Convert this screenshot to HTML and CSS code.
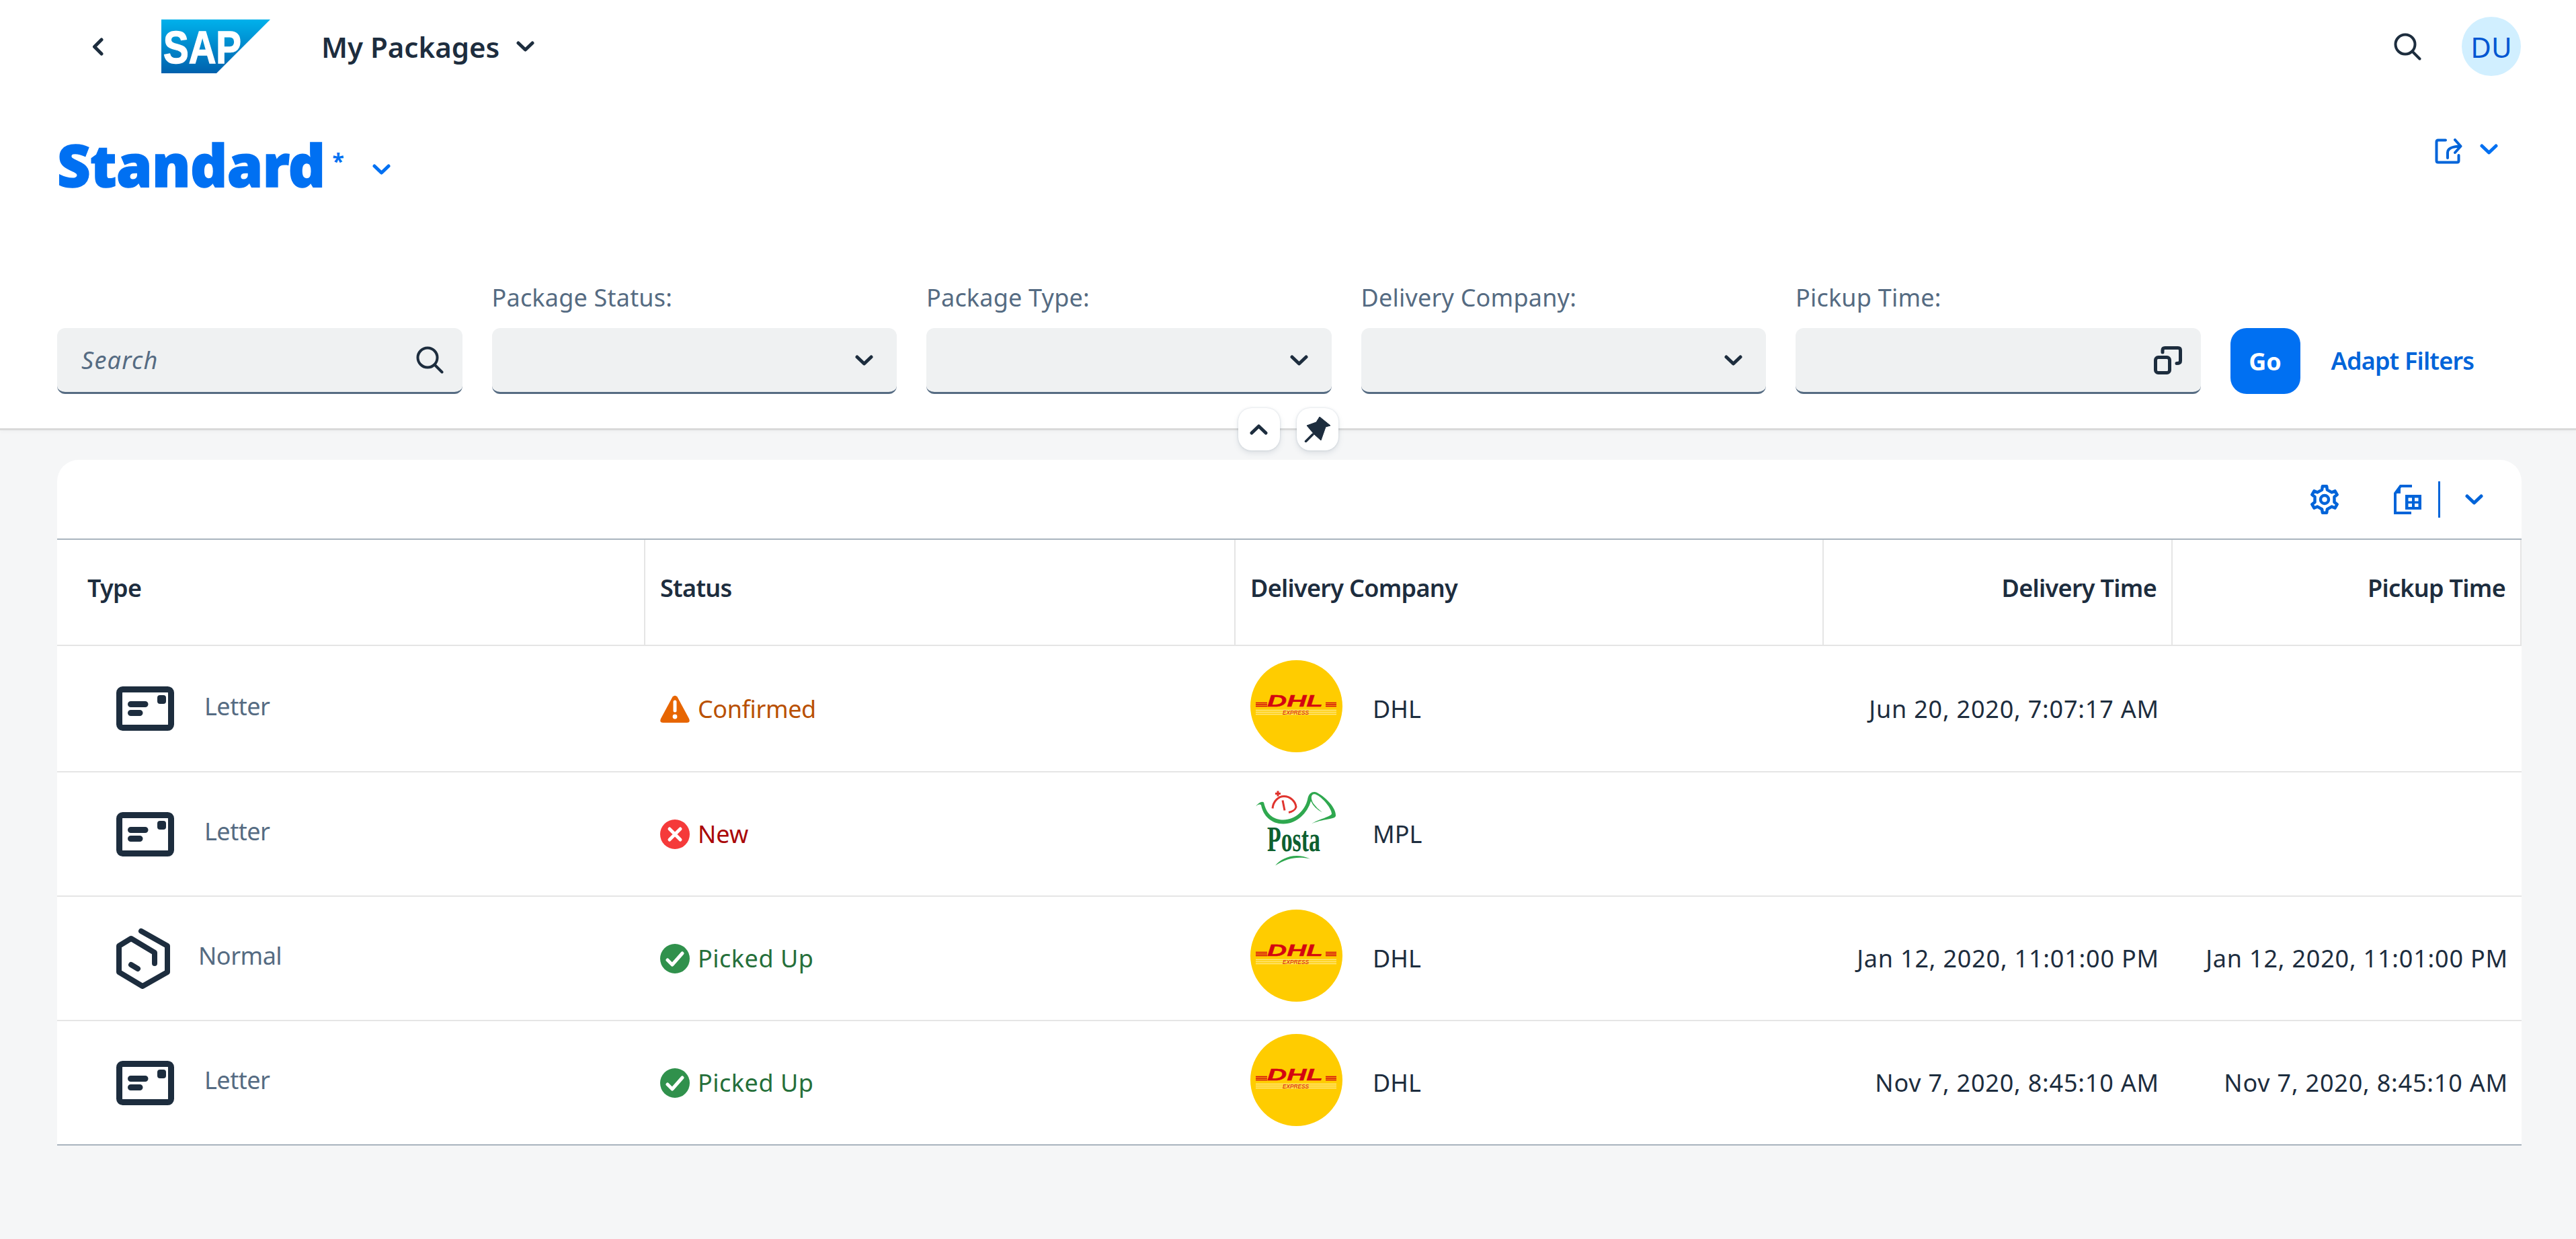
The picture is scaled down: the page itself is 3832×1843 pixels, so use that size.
FILE: index.html
```html
<!DOCTYPE html>
<html lang="en">
<head>
    <meta charset="UTF-8">
    <meta name="viewport" content="width=device-width, initial-scale=1.0">
    <title>My Packages</title>
    <link rel="stylesheet" href="styles.css">
</head>
<body>

    <svg class="icon-defs" width="0" height="0">
        <defs>
            <linearGradient id="sap-blue" x1="0" y1="0" x2="0" y2="1">
                <stop offset="0" stop-color="#00b1eb"/>
                <stop offset="1" stop-color="#0061ad"/>
            </linearGradient>
            <symbol id="i-search" viewBox="0 0 41 41">
                <circle cx="17" cy="17" r="14.5" fill="none" stroke="currentColor" stroke-width="4"/>
                <path d="M27.5 27.5L38.5 38.5" fill="none" stroke="currentColor" stroke-width="4" stroke-linecap="round"/>
            </symbol>
            <symbol id="i-down" viewBox="0 0 27 16">
                <path d="M3 3L13.5 13L24 3" fill="none" stroke="currentColor" stroke-width="5" stroke-linecap="round" stroke-linejoin="round"/>
            </symbol>
            <symbol id="i-letter" viewBox="0 0 86 66">
                <rect x="4.5" y="4.5" width="77" height="57" rx="5" fill="none" stroke="currentColor" stroke-width="9"/>
                <path d="M21.5 26.5H43M21.5 39.5H35" fill="none" stroke="currentColor" stroke-width="9" stroke-linecap="round"/>
                <rect x="61" y="13" width="13" height="13" rx="4" fill="currentColor"/>
            </symbol>
            <symbol id="i-box" viewBox="0 0 80 90">
                <path d="M37 4L76 26V65L39 86L4 65V26L22 15L57 36V52M22 54L32 60" fill="none" stroke="currentColor" stroke-width="8" stroke-linecap="round" stroke-linejoin="round"/>
            </symbol>
            <symbol id="i-warning" viewBox="0 0 44 41">
                <path d="M18.5 2.5Q22 -1 25.500 2.500L43 35Q45.500 41 39.500 41H4.500Q-1.500 41 1 35Z" fill="#e76500"/>
                <path d="M22 10V23" stroke="#fff" stroke-width="5" stroke-linecap="round"/>
                <circle cx="22" cy="32" r="3.400" fill="#fff"/>
            </symbol>
            <symbol id="i-error" viewBox="0 0 44 44">
                <circle cx="22" cy="22" r="22" fill="#f53a3a"/>
                <path d="M14 14L30 30M30 14L14 30" stroke="#fff" stroke-width="5" stroke-linecap="round"/>
            </symbol>
            <symbol id="i-success" viewBox="0 0 44 44">
                <circle cx="22" cy="22" r="22" fill="#30914c"/>
                <path d="M11 24L18 31L33 14" fill="none" stroke="#fff" stroke-width="5" stroke-linecap="round" stroke-linejoin="round"/>
            </symbol>
            <symbol id="i-dhl" viewBox="0 0 137 137">
                <circle cx="68.500" cy="68.500" r="68.500" fill="#ffcc00"/>
                <path d="M8 74.500H128M8 77.500H128M8 80.500H128" stroke="#ffe680" stroke-width="1.600"/>
                <path d="M8 63.500H25M8 66H25M8 68.500H25M112 63.500H128M112 66H128M112 68.500H128" stroke="#d40511" stroke-width="1.300"/>
                <text x="25" y="69" class="dhl-word" textLength="83" lengthAdjust="spacingAndGlyphs">DHL</text>
                <text x="48" y="81" class="dhl-small" textLength="39" lengthAdjust="spacingAndGlyphs">EXPRESS</text>
            </symbol>
            <symbol id="i-posta" viewBox="-7 -7.500 137 137">
                <path d="M1 24Q8 15 13 18C17 38 30 44 42 44C60 44 74 30 78 14C80 2 88 1 93 4C106 11 121 27 120 38C119 44 100 42 84 50C96 42 112 40 114 35C114 27 100 10 90 6C83 4 82 12 87 20Q92 27 100 33Q88 27 83 16C78 34 62 50 42 50C24 50 12 38 9 22Q6 19 1 24Z" fill="#2fa84f"/>
                <path d="M26 27C27 16 35 9 43 9C52 9 60 16 61 25C60 29 55 32 50 33M41 15L44 30M30 5H38M34 1V9" fill="none" stroke="#e0342e" stroke-width="3"/>
                <text x="18" y="90" class="posta-word" textLength="79" lengthAdjust="spacingAndGlyphs">Posta</text>
                <path d="M30 112C40 100 60 92 82 102C65 98 48 100 30 112Z" fill="#2fa84f"/>
            </symbol>
        </defs>
    </svg>

    <!-- Top part: shell bar, variant title and filters -->
    <header class="page-header">
        <div class="shellbar">
            <svg class="back-icon" viewBox="0 0 17 27"><path d="M14 3L3.500 13.500L14 24" fill="none" stroke="currentColor" stroke-width="5" stroke-linecap="round" stroke-linejoin="round"/></svg>
            <svg class="sap-logo" viewBox="0 0 162 80">
                <path d="M0 0H162L82 80H0Z" fill="url(#sap-blue)"/>
                <text x="3" y="65" class="sap-word" textLength="116" lengthAdjust="spacingAndGlyphs">SAP</text>
            </svg>
            <span class="app-title">My Packages</span>
            <svg class="chevron app-chevron"><use href="#i-down"/></svg>
            <svg class="shell-search"><use href="#i-search"/></svg>
            <div class="avatar">DU</div>
        </div>

        <div class="variant-row">
            <h1 class="variant-title">Standard</h1>
            <span class="variant-star">*</span>
            <svg class="chevron variant-chevron"><use href="#i-down"/></svg>
            <div class="variant-actions">
                <svg class="share-icon" viewBox="0 0 41 38">
                    <path d="M16 2.500H5Q2.500 2.500 2.500 5V33Q2.500 35.500 5 35.500H33Q35.500 35.500 35.500 33V25M19 29V21Q19 12 38 11.500M30 2L38.500 11.500L30 21" fill="none" stroke="currentColor" stroke-width="4" stroke-linecap="round" stroke-linejoin="round"/>
                </svg>
                <svg class="chevron"><use href="#i-down"/></svg>
            </div>
        </div>

        <div class="filter-bar">
            <div class="filter">
                <div class="field">
                    <span class="placeholder">Search</span>
                    <svg class="field-search"><use href="#i-search"/></svg>
                </div>
            </div>
            <div class="filter">
                <label class="filter-label">Package Status:</label>
                <div class="field"><svg class="chevron"><use href="#i-down"/></svg></div>
            </div>
            <div class="filter">
                <label class="filter-label">Package Type:</label>
                <div class="field"><svg class="chevron"><use href="#i-down"/></svg></div>
            </div>
            <div class="filter">
                <label class="filter-label">Delivery Company:</label>
                <div class="field"><svg class="chevron"><use href="#i-down"/></svg></div>
            </div>
            <div class="filter">
                <label class="filter-label">Pickup Time:</label>
                <div class="field">
                    <svg class="value-help" viewBox="0 0 42 42">
                        <rect x="2.500" y="16.500" width="21" height="23" rx="4" fill="none" stroke="currentColor" stroke-width="5"/>
                        <path d="M13 9V6Q13 2.500 16.500 2.500H36Q39.500 2.500 39.500 6V22Q39.500 25.500 34 25.500" fill="none" stroke="currentColor" stroke-width="5" stroke-linecap="round"/>
                    </svg>
                </div>
            </div>
            <button class="go-button">Go</button>
            <a class="adapt-link">Adapt Filters</a>
        </div>

        <!-- Collapse and pin buttons sit on the header edge -->
        <div class="header-controls">
            <div class="round-button">
                <svg class="chevron chevron-up"><use href="#i-down"/></svg>
            </div>
            <div class="round-button">
                <svg class="pin-icon" viewBox="0 0 39 38">
                    <path d="M23 0L39 13L32 15L25 35L15 26L4 13L18 8Z" fill="currentColor" stroke="currentColor" stroke-width="1" stroke-linejoin="round"/>
                    <path d="M13 26L2.500 36.500" stroke="currentColor" stroke-width="3.500" stroke-linecap="round"/>
                </svg>
            </div>
        </div>
    </header>

    <main class="content">
        <section class="table-card">
            <div class="table-toolbar">
                <svg class="gear-icon" viewBox="0 0 44 44">
                    <path d="M18.120 7.510L18.870 2.250H25.130L25.880 7.510L32.600 11.400L37.540 9.410L40.670 14.830L36.490 18.120V25.880L40.670 29.170L37.540 34.590L32.600 32.600L25.880 36.490L25.130 41.750H18.870L18.120 36.490L11.400 32.600L6.460 34.590L3.330 29.170L7.510 25.880V18.120L3.330 14.830L6.460 9.410L11.400 11.400Z" fill="none" stroke="currentColor" stroke-width="4.500" stroke-linejoin="round"/>
                    <circle cx="22" cy="22" r="6" fill="none" stroke="currentColor" stroke-width="4.500"/>
                </svg>
                <svg class="export-icon" viewBox="0 0 41 44">
                    <path d="M27 2H10L2 13V42H26" fill="none" stroke="currentColor" stroke-width="4"/>
                    <path d="M10 2L2 13H10Z" fill="currentColor"/>
                    <path d="M17 15H41V37H17ZM21.500 19.500V24.500H27V19.500ZM31 19.500V24.500H36.500V19.500ZM21.500 28V33H27V28ZM31 28V33H36.500V28Z" fill="currentColor" fill-rule="evenodd"/>
                </svg>
                <span class="toolbar-divider"></span>
                <svg class="chevron"><use href="#i-down"/></svg>
            </div>

            <table class="packages">
                <colgroup>
                    <col class="col-main">
                    <col class="col-main-wide">
                    <col class="col-main">
                    <col class="col-time">
                    <col class="col-time">
                </colgroup>
                <thead>
                    <tr>
                        <th>Type</th>
                        <th>Status</th>
                        <th>Delivery Company</th>
                        <th class="align-end">Delivery Time</th>
                        <th class="align-end">Pickup Time</th>
                    </tr>
                </thead>
                <tbody>
                    <tr class="first-row">
                        <td><div class="type-cell"><svg class="letter-icon"><use href="#i-letter"/></svg><span>Letter</span></div></td>
                        <td><div class="status status-warning"><svg class="status-icon warning-icon"><use href="#i-warning"/></svg>Confirmed</div></td>
                        <td><div class="company"><svg class="company-logo"><use href="#i-dhl"/></svg><span>DHL</span></div></td>
                        <td class="align-end time-cell">Jun 20, 2020, 7:07:17 AM</td>
                        <td class="align-end time-cell"></td>
                    </tr>
                    <tr>
                        <td><div class="type-cell"><svg class="letter-icon"><use href="#i-letter"/></svg><span>Letter</span></div></td>
                        <td><div class="status status-error"><svg class="status-icon"><use href="#i-error"/></svg>New</div></td>
                        <td><div class="company"><svg class="company-logo"><use href="#i-posta"/></svg><span>MPL</span></div></td>
                        <td class="align-end time-cell"></td>
                        <td class="align-end time-cell"></td>
                    </tr>
                    <tr>
                        <td><div class="type-cell"><svg class="box-icon"><use href="#i-box"/></svg><span>Normal</span></div></td>
                        <td><div class="status status-success"><svg class="status-icon"><use href="#i-success"/></svg>Picked Up</div></td>
                        <td><div class="company"><svg class="company-logo"><use href="#i-dhl"/></svg><span>DHL</span></div></td>
                        <td class="align-end time-cell">Jan 12, 2020, 11:01:00 PM</td>
                        <td class="align-end time-cell">Jan 12, 2020, 11:01:00 PM</td>
                    </tr>
                    <tr class="last-row">
                        <td><div class="type-cell"><svg class="letter-icon"><use href="#i-letter"/></svg><span>Letter</span></div></td>
                        <td><div class="status status-success"><svg class="status-icon"><use href="#i-success"/></svg>Picked Up</div></td>
                        <td><div class="company"><svg class="company-logo"><use href="#i-dhl"/></svg><span>DHL</span></div></td>
                        <td class="align-end time-cell">Nov 7, 2020, 8:45:10 AM</td>
                        <td class="align-end time-cell">Nov 7, 2020, 8:45:10 AM</td>
                    </tr>
                </tbody>
            </table>
        </section>
    </main>

</body>
</html>
```

FILE: styles.css
```css
/* Page base */
* {
    box-sizing: border-box;
}

body {
    margin: 0;
    min-height: 100vh;
    background-color: #f5f6f7;
    color: #1d2d3e;
    font-family: "Noto Sans", "Open Sans", sans-serif;
    font-size: 36px;
}

svg {
    display: block;
    flex-shrink: 0;
}

.icon-defs {
    position: absolute;
}

.chevron {
    width: 27px;
    height: 16px;
    color: #1d2d3e;
}

/* Header block */
.page-header {
    position: relative;
    height: 640px;
    background-color: #fff;
    border-bottom: 3px solid #d9d9d9;
    box-shadow: 0 2px 6px rgba(0, 0, 0, 0.03);
}

.shellbar {
    display: flex;
    align-items: center;
    height: 138px;
    padding: 0 82px 0 137px;
}

.back-icon {
    width: 17px;
    height: 27px;
    margin-right: 86px;
}

.sap-logo {
    width: 162px;
    height: 80px;
    margin-right: 76px;
}

.sap-word {
    font-family: "Liberation Sans", sans-serif;
    font-weight: 700;
    font-size: 68px;
    fill: #fff;
    stroke: #fff;
    stroke-width: 1.5px;
}

.app-title {
    font-size: 42px;
    font-weight: 600;
}

.app-chevron {
    margin-left: 25px;
}

.shell-search {
    width: 41px;
    height: 41px;
    margin-left: auto;
    margin-right: 60px;
}

.avatar {
    display: flex;
    align-items: center;
    justify-content: center;
    width: 88px;
    height: 88px;
    border-radius: 50%;
    background-color: #d1efff;
    color: #0057d2;
    font-size: 42px;
}

/* Variant title row */
.variant-row {
    display: flex;
    align-items: flex-start;
    height: 294px;
    padding: 64px 116px 0 85px;
    color: #0070f2;
}

.variant-title {
    margin: 0;
    font-size: 86px;
    line-height: 86px;
    font-weight: 900;
    letter-spacing: -0.6px;
    -webkit-text-stroke: 1.5px #0070f2;
}

.variant-star {
    width: 16px;
    margin: 8px 0 0 11px;
    font-size: 32px;
    font-weight: 700;
    line-height: 60px;
}

.variant-chevron {
    margin: 42px 0 0 44px;
    color: #0070f2;
}

.variant-actions {
    display: flex;
    align-items: flex-start;
    gap: 26px;
    margin-left: auto;
    margin-top: 4px;
    color: #0064d9;
}

.variant-actions .chevron {
    margin-top: 8px;
    color: #0070f2;
}

.share-icon {
    width: 41px;
    height: 38px;
}

/* Filter bar */
.filter-bar {
    display: flex;
    align-items: flex-end;
    gap: 44px;
    padding: 0 0 0 85px;
}

.filter {
    width: 602.500px;
}

.filter-label {
    display: block;
    height: 56px;
    color: #556b82;
    font-size: 36px;
    line-height: 22px;
    letter-spacing: 0.2px;
}

.field {
    display: flex;
    align-items: center;
    justify-content: flex-end;
    height: 98px;
    padding: 0 28px 0 36px;
    background-color: #eff1f2;
    border-bottom: 3px solid #556b82;
    border-radius: 12px;
}

.field .chevron {
    margin-right: 7px;
}

.placeholder {
    margin-right: auto;
    color: #556b82;
    font-style: italic;
    letter-spacing: 1.2px;
}

.field-search {
    width: 41px;
    height: 41px;
}

.value-help {
    width: 42px;
    height: 42px;
}

.go-button {
    width: 104px;
    height: 98px;
    border: 0;
    border-radius: 24px;
    background-color: #0070f2;
    color: #fff;
    font-family: inherit;
    font-size: 36px;
    font-weight: 700;
}

.adapt-link {
    margin-left: 2px;
    color: #0064d9;
    font-size: 36px;
    font-weight: 600;
    line-height: 98px;
    letter-spacing: -0.8px;
}

.header-controls {
    position: absolute;
    left: 0;
    right: 0;
    top: 607px;
    display: flex;
    justify-content: center;
    gap: 25px;
}

.round-button {
    display: flex;
    align-items: center;
    justify-content: center;
    width: 62px;
    height: 63px;
    border-radius: 20px;
    background-color: #fff;
    box-shadow: 0 0 3px rgba(85, 107, 130, 0.25), 0 4px 8px rgba(85, 107, 130, 0.15);
}

.chevron-up {
    transform: rotate(180deg);
}

.pin-icon {
    width: 39px;
    height: 38px;
}

/* Table card */
.content {
    padding: 44px 81px 0 85px;
}

.table-card {
    background-color: #fff;
    border-radius: 32px 32px 0 0;
}

.table-toolbar {
    display: flex;
    align-items: center;
    justify-content: flex-end;
    height: 119px;
    padding-right: 57px;
    border-bottom: 2px solid #a9b4be;
    color: #0064d9;
}

.table-toolbar .chevron {
    color: #0064d9;
}

.gear-icon {
    width: 44px;
    height: 44px;
    margin-right: 81px;
}

.export-icon {
    width: 41px;
    height: 44px;
}

.toolbar-divider {
    width: 3px;
    height: 54px;
    margin: 0 37px 0 25px;
    background-color: #0064d9;
}

.packages {
    width: 100%;
    table-layout: fixed;
    border-collapse: separate;
    border-spacing: 0;
}

.col-main {
    width: 875px;
}

.col-main-wide {
    width: 878px;
}

.packages th {
    height: 158px;
    padding: 0 22px 14px;
    border-right: 2px solid #e5e5e5;
    border-bottom: 2px solid #e5e5e5;
    text-align: left;
    font-weight: 600;
    letter-spacing: -0.7px;
}

.packages th:first-child {
    padding-left: 45px;
}

.packages td {
    height: 185px;
    padding: 0 22px;
    border-bottom: 2px solid #e5e5e5;
}

.packages .first-row td {
    height: 188px;
}

.packages .last-row td {
    border-bottom-color: #a9b4be;
}

.packages .align-end {
    text-align: right;
}

.packages .time-cell {
    padding-right: 20px;
    letter-spacing: 0.8px;
}

/* Cell contents */
.type-cell {
    display: flex;
    align-items: center;
    gap: 45px;
    padding-left: 66px;
    color: #1d2d3e;
}

.type-cell span {
    padding-bottom: 8px;
    color: #556b82;
    letter-spacing: -0.5px;
}

.letter-icon {
    width: 86px;
    height: 66px;
}

.box-icon {
    width: 80px;
    height: 90px;
    margin-right: -3px;
}

.status {
    display: flex;
    align-items: center;
    gap: 12px;
}

.status-icon {
    width: 44px;
    height: 44px;
}

.warning-icon {
    height: 41px;
}

.status-warning {
    color: #b95000;
    letter-spacing: -0.4px;
}

.status-error {
    color: #aa0808;
}

.status-success {
    color: #256f3a;
    letter-spacing: 0.5px;
}

.company {
    display: flex;
    align-items: center;
    gap: 45px;
}

.company-logo {
    width: 137px;
    height: 137px;
    margin-bottom: 8px;
}

.dhl-word {
    font-family: "Liberation Sans", sans-serif;
    font-weight: 700;
    font-style: italic;
    font-size: 24px;
    fill: #d40511;
    stroke: #d40511;
    stroke-width: 0.4px;
}

.dhl-small {
    font-family: "Liberation Sans", sans-serif;
    font-style: italic;
    font-size: 9px;
    fill: #d40511;
}

.posta-word {
    font-family: "Liberation Serif", serif;
    font-weight: 700;
    font-size: 52px;
    fill: #0d6030;
}
```
